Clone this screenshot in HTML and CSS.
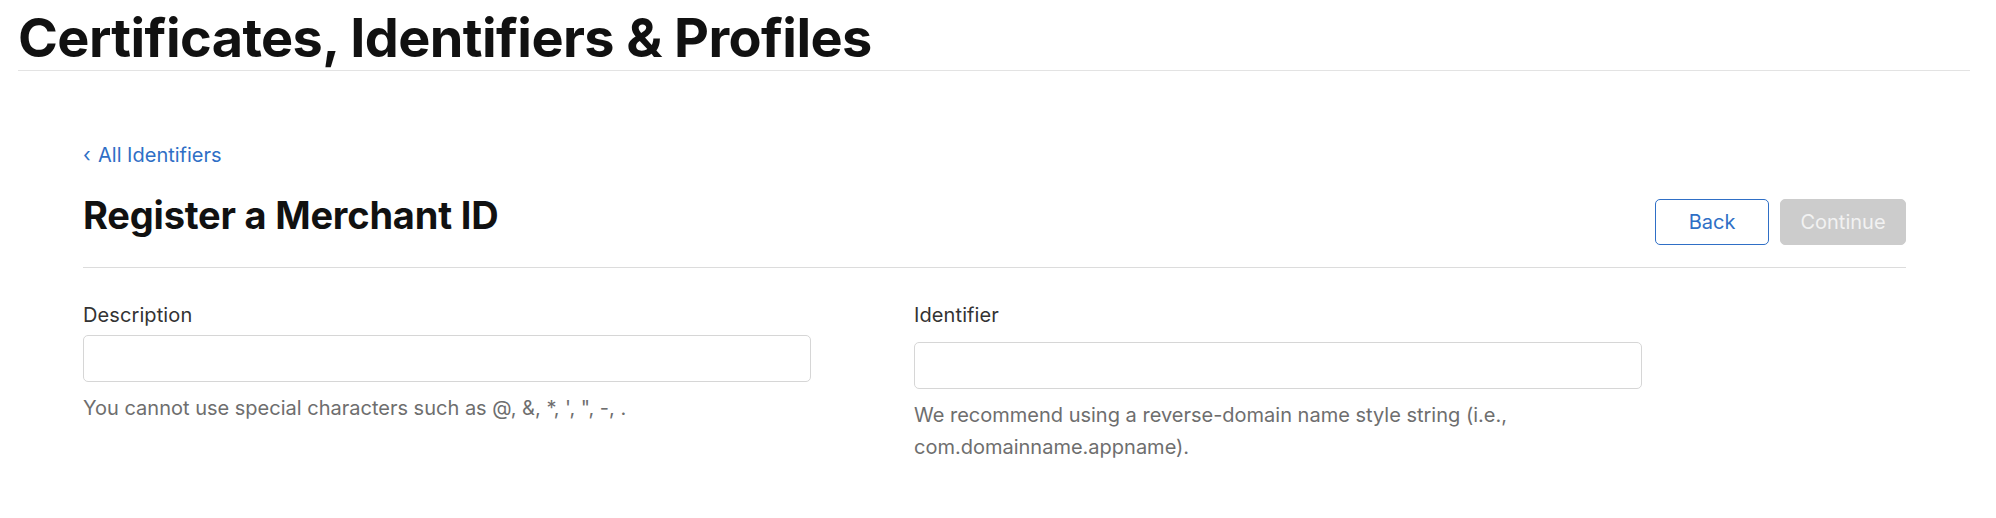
FILE: index.html
```html
<!DOCTYPE html>
<html lang="en">
<head>
<meta charset="utf-8">
<title>Register a Merchant ID</title>
<link rel="stylesheet" href="styles.css">
</head>
<body>
<header class="page-header">
  <h1 class="page-title">Certificates, Identifiers &amp; Profiles</h1>
</header>
<main class="content">
  <a class="back-link" href="#"><span class="chev">‹</span>All Identifiers</a>
  <div class="title-row">
    <h2 class="section-title">Register a Merchant ID</h2>
    <div class="actions">
      <button class="btn btn-secondary" type="button">Back</button>
      <button class="btn btn-disabled" type="button" disabled>Continue</button>
    </div>
  </div>
  <form class="form-grid">
    <div class="field">
      <label class="field-label" for="desc">Description</label>
      <input class="field-input" id="desc" type="text">
      <p class="field-help">You cannot use special characters such as @, &amp;, *, ', ", -, .</p>
    </div>
    <div class="field">
      <label class="field-label field-label--loose" for="ident">Identifier</label>
      <input class="field-input" id="ident" type="text">
      <p class="field-help">We recommend using a reverse-domain name style string (i.e.,<br>com.domainname.appname).</p>
    </div>
  </form>
</main>
</body>
</html>
```

FILE: styles.css
```css
* { box-sizing: border-box; }
html, body { margin: 0; padding: 0; background: #fff; }
body {
  font-family: Inter, "Noto Sans", "Liberation Sans", sans-serif;
  color: #111;
}
.page-header {
  margin: 0 26px 0 18px;
  padding: 6px 0 0 0;
  border-bottom: 1px solid #e3e3e3;
}
.page-title {
  margin: 0;
  font-size: 54px;
  line-height: 64px;
  font-weight: 700;
  letter-spacing: -0.6px;
  color: #111;
}
.content {
  padding: 0 90px 0 83px;
}
.back-link {
  display: inline-block;
  margin-top: 72px;
  font-size: 20px;
  line-height: 24px;
  color: #2f6fc6;
  text-decoration: none;
}
.chev { display: inline-block; width: 15px; }
.title-row {
  display: flex;
  justify-content: space-between;
  align-items: flex-start;
  margin-top: 24px;
  padding-bottom: 22px;
  border-bottom: 1px solid #dcdcdc;
}
.section-title {
  margin: 0;
  font-size: 38px;
  line-height: 48px;
  font-weight: 700;
  letter-spacing: -0.2px;
  color: #111;
}
.actions {
  display: flex;
  gap: 11px;
  margin-top: 8px;
}
.btn {
  height: 46px;
  border-radius: 5px;
  font-family: inherit;
  font-size: 20px;
  padding: 0;
}
.btn-secondary {
  width: 114px;
  background: #fff;
  border: 1px solid #2f6fc6;
  color: #2f6fc6;
}
.btn-disabled {
  width: 126px;
  background: #cccccc;
  border: 1px solid #cccccc;
  color: #f2f2f2;
}
.form-grid {
  display: grid;
  grid-template-columns: 728px 728px;
  column-gap: 103px;
  margin-top: 35px;
}
.field { display: flex; flex-direction: column; }
.field-label {
  font-size: 20px;
  line-height: 24px;
  letter-spacing: 0.1px;
  color: #333;
  margin-bottom: 8px;
}
.field-label--loose { margin-bottom: 15px; }
.field-input {
  height: 47px;
  border: 1px solid #d6d6d6;
  border-radius: 5px;
  background: #fff;
  font-family: inherit;
  font-size: 20px;
  padding: 0 12px;
}
.field-help {
  margin: 10px 0 0 0;
  font-size: 20px;
  line-height: 32px;
  color: #6e6e6e;
}
```
